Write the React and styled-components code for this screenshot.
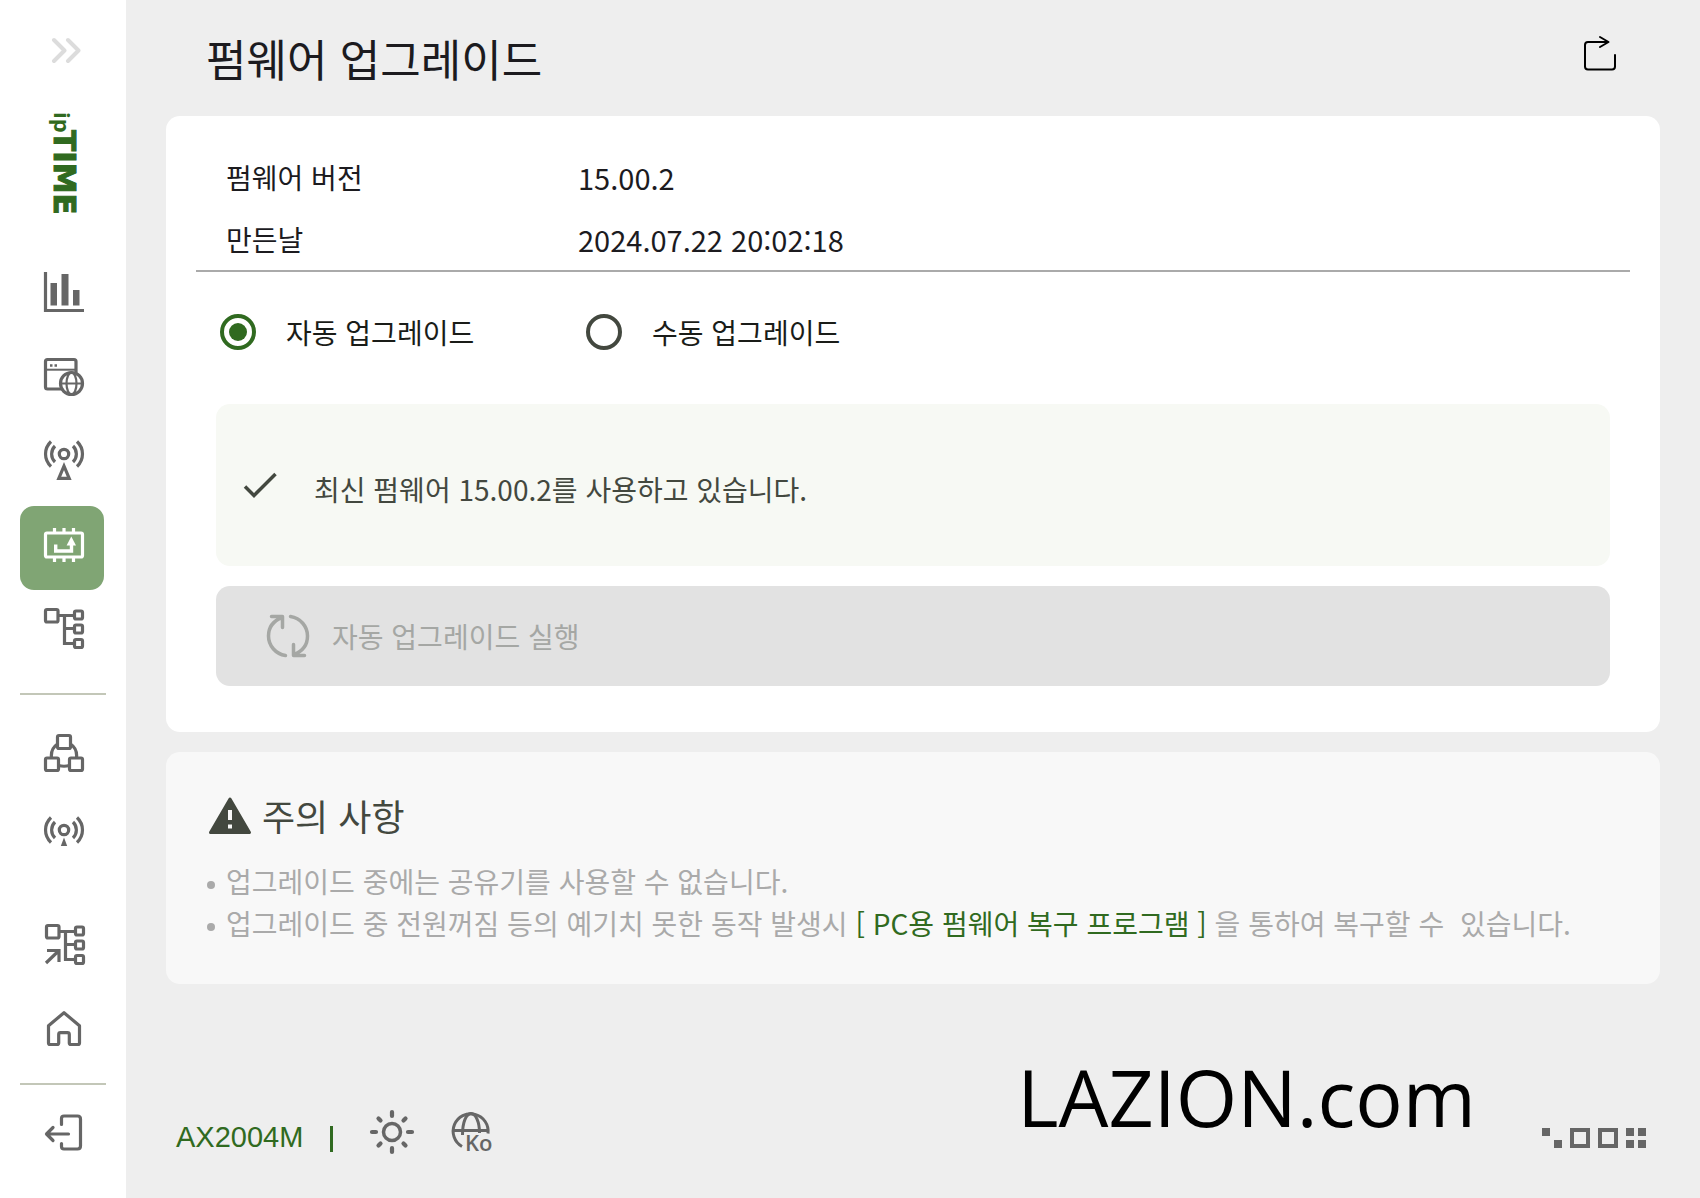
import { useState } from 'react';
import styled, { createGlobalStyle } from 'styled-components';

const GlobalStyle = createGlobalStyle`
  * {
    box-sizing: border-box;
  }

  body {
    margin: 0;
    background: #eeeeee;
    color: #1c1b1f;
    font-family: 'Noto Sans CJK KR', 'Noto Sans', sans-serif;
    font-size: 28px;
    line-height: 42px;
  }

  button {
    padding: 0;
    border: 0;
    background: none;
    color: inherit;
    font: inherit;
    cursor: pointer;
  }

  svg {
    display: block;
    flex: none;
  }
`;

const Page = styled.div`
  display: flex;
  min-height: 100vh;
`;

const Sidebar = styled.aside`
  display: flex;
  flex-direction: column;
  flex: none;
  width: 126px;
  padding: 30px 20px 20px;
  background: #ffffff;
  color: #666666;
`;

const ExpandButton = styled.button`
  align-self: center;
  padding-left: 6px;
  color: #dcdcdc;
`;

const Logo = styled.a`
  align-self: center;
  margin: 40px 0 36px;
`;

const NavGroup = styled.nav`
  display: flex;
  flex-direction: column;
  margin-top: ${({ $push }) => ($push ? 'auto' : '0')};
`;

const NavButton = styled.button`
  display: flex;
  justify-content: center;
  align-items: center;
  width: 84px;
  height: 84px;
  && {
    padding: 0 0 8px 4px;
  }
  border-radius: 14px;
  background: ${({ $active }) => ($active ? '#80a574' : 'transparent')};
  color: ${({ $active }) => ($active ? '#ffffff' : 'inherit')};
`;

const NavLine = styled.hr`
  width: 100%;
  height: 2px;
  margin: ${({ $tight }) => ($tight ? '9px 0' : '19px 0')};
  border: 0;
  background: #c3c7b8;
`;

const Main = styled.main`
  display: flex;
  flex-direction: column;
  flex: 1;
  min-width: 0;
  padding: 0 40px;
`;

const Header = styled.header`
  display: flex;
  justify-content: space-between;
  align-items: center;
  height: 116px;
  padding: 0 40px;
`;

const Title = styled.h1`
  margin: 0;
  font-size: 44px;
  line-height: 64px;
  font-weight: 400;
`;

const RefreshButton = styled.button`
  && {
    padding-bottom: 6px;
  }
`;

const Card = styled.section`
  padding: 30px 30px 46px;
  border-radius: 14px;
  background: #ffffff;
`;

const InfoList = styled.dl`
  margin: 0;
  border-bottom: 2px solid #aaaaaa;
`;

const InfoRow = styled.div`
  display: grid;
  grid-template-columns: 352px 1fr;
  align-items: center;
  height: 62px;
  padding-left: 30px;
`;

const InfoTerm = styled.dt`
  margin: 0;
`;

const InfoValue = styled.dd`
  margin: 0;
  font-size: 29px;
`;

const RadioGroup = styled.div`
  display: grid;
  grid-template-columns: 366px 1fr;
  align-items: center;
  height: 120px;
  padding: 0 24px;
  color: #1a1c18;
`;

const RadioLabel = styled.label`
  display: flex;
  align-items: center;
  gap: 30px;
  cursor: pointer;
`;

const Radio = styled.input`
  appearance: none;
  width: 36px;
  height: 36px;
  margin: 0;
  padding: 5px;
  border: 4px solid #43483f;
  border-radius: 50%;

  &:checked {
    border-color: #306a20;
    background: #306a20 content-box;
  }
`;

const Status = styled.div`
  display: flex;
  align-items: center;
  gap: 37px;
  height: 162px;
  margin: 12px 20px 20px;
  padding: 0 27px;
  border-radius: 14px;
  background: #f7f9f4;
  color: #43483f;
`;

const StatusText = styled.p`
  margin: 0;
  padding-top: 8px;
`;

const Action = styled.div`
  display: flex;
  padding: 0 20px;
`;

const RunButton = styled.button`
  display: flex;
  align-items: center;
  gap: 22px;
  flex: 1;
  height: 100px;
  && {
    padding: 0 50px;
  }
  border-radius: 14px;
  background: #e2e2e2;
  color: #a5a7a4;
  cursor: default;
`;

const Notice = styled.section`
  margin-top: 20px;
  padding: 36px 40px 40px;
  border-radius: 14px;
  background: #f8f8f8;
`;

const NoticeTitle = styled.h2`
  display: flex;
  align-items: center;
  gap: 10px;
  margin: 0 0 18px;
  padding-left: 2px;
  color: #43483f;
  font-size: 36px;
  line-height: 54px;
  font-weight: 400;
`;

const NoticeList = styled.ul`
  margin: 0;
  padding: 0;
  list-style: none;
  color: #aaaaaa;
`;

const NoticeItem = styled.li`
  display: flex;
  gap: 11px;

  &::before {
    content: '';
    flex: none;
    width: 8px;
    height: 8px;
    margin: 21px 0 0 1px;
    border-radius: 50%;
    background: #aaaaaa;
  }
`;

const NoticeLink = styled.a`
  color: #306a20;
  text-decoration: none;
`;

const Footer = styled.footer`
  display: flex;
  align-items: flex-end;
  margin-top: auto;
  padding: 0 14px 40px 10px;
  color: #666666;
`;

const Model = styled.span`
  color: #306a20;
  font-family: 'Liberation Sans', sans-serif;
  font-size: 29px;
`;

const Bar = styled.span`
  width: 3px;
  height: 26px;
  margin: 0 35px 6px 27px;
  background: #306a20;
`;

const FooterButton = styled.button`
  margin: 0 32px 2px 0;
`;

const SiteName = styled.span`
  margin: 0 64px 8px auto;
  color: #000000;
  font-family: 'Open Sans', sans-serif;
  font-size: 79px;
  line-height: 106px;
`;

const DotLogo = styled.svg`
  margin-bottom: 10px;
`;

function Icon({ children }) {
  return (
    <svg
      width="48"
      height="48"
      viewBox="0 0 48 48"
      fill="none"
      stroke="currentColor"
      strokeWidth="3.2"
      aria-hidden="true"
    >
      {children}
    </svg>
  );
}

function TreeShape() {
  return (
    <>
      <rect x="5.5" y="5.5" width="12.5" height="12.5" rx="1.5" />
      <rect x="34.5" y="7" width="8" height="8" rx="1.5" />
      <rect x="34.5" y="21" width="8" height="8" rx="1.5" />
      <rect x="34.5" y="35.5" width="8" height="8" rx="1.5" />
      <path d="M18 11.5H34M24.5 11.5V39.5H34M24.5 24.5H34" />
    </>
  );
}

function WaveShape() {
  return (
    <>
      <circle cx="24" cy="18" r="4.7" />
      <path d="M11 5.5C3.7 12.5 3.7 23.5 11 30.5M37 5.5C44.3 12.5 44.3 23.5 37 30.5" />
      <path d="M15 10C10.5 14.5 10.5 21.5 15 26M33 10C37.5 14.5 37.5 21.5 33 26" />
    </>
  );
}

const icons = {
  chart: (
    <>
      <path d="M5.5 4V42.5H44" />
      <path
        d="M10.5 15h6.5v22.5h-6.5zM21.5 6h7v31.5h-7zM33 22h6.5v15.5h-6.5z"
        fill="currentColor"
        stroke="none"
      />
    </>
  ),
  web: (
    <>
      <rect x="5.5" y="7.5" width="30.5" height="29.5" rx="2" />
      <path d="M5.5 17.7H36" strokeWidth="2" />
      <path d="M10 13.5H12.5M14.5 13.5H17" strokeWidth="2.5" />
      <circle cx="31.5" cy="31.5" r="11" fill="#ffffff" />
      <ellipse cx="31.5" cy="31.5" rx="5" ry="11" strokeWidth="2.2" />
      <path d="M20.5 31.5H42.5" strokeWidth="2" />
    </>
  ),
  antenna: (
    <>
      <WaveShape />
      <path d="M24 30L18.8 42.3H29.2Z" />
    </>
  ),
  firmware: (
    <>
      <rect x="5.5" y="13" width="37" height="24" rx="1.5" />
      <path d="M14.5 8V13M24 8V13M33.5 8V13M14.5 37V42M24 37V42M33.5 37V42" />
      <path d="M15.7 24.5V31H31.5V24" strokeWidth="3.4" />
      <path d="M31.3 16.5L36 25.5H26.6Z" fill="currentColor" stroke="none" />
    </>
  ),
  tree: <TreeShape />,
  cluster: (
    <>
      <rect x="17.5" y="7.5" width="13" height="13" rx="1.5" />
      <rect x="5.5" y="30" width="13" height="12.5" rx="1.5" />
      <rect x="29.5" y="30" width="13" height="12.5" rx="1.5" />
      <path d="M17.5 16C13 19 10.8 24 11.5 30M30.5 16C35 19 37.2 24 36.5 30M18.5 37.5Q24 39 29.5 37.5" />
    </>
  ),
  beacon: (
    <>
      <WaveShape />
      <path d="M24 25.5L27.2 34H20.8Z" fill="currentColor" stroke="none" />
    </>
  ),
  shortcut: (
    <>
      <g transform="translate(1 0)">
        <TreeShape />
      </g>
      <path d="M7 30.5H19V42M18.5 31L6 43" />
    </>
  ),
  home: (
    <path
      d="M24 8.7L39.5 21.8V39Q39.5 40.5 38 40.5H31Q29.3 40.5 29.3 39V30.5Q29.3 28.7 27.5 28.7H20.5Q18.7 28.7 18.7 30.5V39Q18.7 40.5 17 40.5H10Q8.5 40.5 8.5 39V21.8Z"
      strokeLinejoin="round"
    />
  ),
  logout: (
    <path
      d="M21.5 16.5V10.5Q21.5 8 24 8H37.5Q40.5 8 40.5 11V38Q40.5 41 37.5 41H24Q21.5 41 21.5 38.5V35.5M28.5 26H7M13 19.5L6.5 26L13 32.5"
      strokeLinecap="round"
      strokeLinejoin="round"
    />
  ),
};

const menus = [
  { icon: 'chart', label: '시스템 상태' },
  { icon: 'web', label: '인터넷 설정' },
  { icon: 'antenna', label: '무선 설정' },
  { icon: 'firmware', label: '펌웨어 업그레이드' },
  { icon: 'tree', label: '고급 설정' },
];
const meshMenus = [
  { icon: 'cluster', label: '메시 구성' },
  { icon: 'beacon', label: '메시 무선' },
];
const linkMenus = [
  { icon: 'shortcut', label: '바로가기' },
  { icon: 'home', label: '홈' },
];

function Menu({ items, active, push }) {
  return (
    <NavGroup $push={push}>
      {items.map(({ icon, label }) => (
        <NavButton key={icon} type="button" aria-label={label} $active={icon === active}>
          <Icon>{icons[icon]}</Icon>
        </NavButton>
      ))}
    </NavGroup>
  );
}

function LogoMark() {
  return (
    <svg width="42" height="108" viewBox="0 0 42 108" fill="#306a20">
      <g transform="translate(12 3) rotate(90)">
        <text x="-1" y="0" fontFamily="'Open Sans', sans-serif" fontSize="22" fontWeight="700">
          ip
        </text>
        <text
          x="17"
          y="0"
          fontFamily="'DejaVu Sans', sans-serif"
          fontSize="31"
          fontWeight="700"
          stroke="#306a20"
          strokeWidth="1"
        >
          TIME
        </text>
      </g>
    </svg>
  );
}

function App() {
  const [mode, setMode] = useState('auto');

  return (
    <Page lang="ko">
      <GlobalStyle />
      <Sidebar>
        <ExpandButton type="button" aria-label="메뉴 펼치기">
          <svg
            width="30"
            height="40"
            viewBox="0 0 30 40"
            fill="none"
            stroke="currentColor"
            strokeWidth="4"
            strokeLinecap="round"
            strokeLinejoin="round"
          >
            <path d="M3 10L13.5 20.5L3 31M17 10L27.5 20.5L17 31" />
          </svg>
        </ExpandButton>
        <Logo href="#" aria-label="ipTIME">
          <LogoMark />
        </Logo>
        <Menu items={menus} active="firmware" />
        <NavLine />
        <Menu items={meshMenus} />
        <Menu items={linkMenus} push />
        <NavLine $tight />
        <NavButton type="button" aria-label="로그아웃">
          <Icon>{icons.logout}</Icon>
        </NavButton>
      </Sidebar>

      <Main>
        <Header>
          <Title>펌웨어 업그레이드</Title>
          <RefreshButton type="button" aria-label="새로고침">
            <svg
              width="40"
              height="40"
              viewBox="0 0 40 40"
              fill="none"
              stroke="#000000"
              strokeWidth="2"
              strokeLinecap="round"
              strokeLinejoin="round"
            >
              <path d="M28 7H8Q5 7 5 10V31.5Q5 34.5 8 34.5H32Q35 34.5 35 31.5V20M20 2L28.5 7L20 12" />
            </svg>
          </RefreshButton>
        </Header>

        <Card>
          <InfoList>
            <InfoRow>
              <InfoTerm>펌웨어 버전</InfoTerm>
              <InfoValue>15.00.2</InfoValue>
            </InfoRow>
            <InfoRow>
              <InfoTerm>만든날</InfoTerm>
              <InfoValue>2024.07.22 20:02:18</InfoValue>
            </InfoRow>
          </InfoList>

          <RadioGroup role="radiogroup" aria-label="업그레이드 방식">
            <RadioLabel>
              <Radio
                type="radio"
                name="mode"
                checked={mode === 'auto'}
                onChange={() => setMode('auto')}
              />
              자동 업그레이드
            </RadioLabel>
            <RadioLabel>
              <Radio
                type="radio"
                name="mode"
                checked={mode === 'manual'}
                onChange={() => setMode('manual')}
              />
              수동 업그레이드
            </RadioLabel>
          </RadioGroup>

          <Status>
            <svg
              width="34"
              height="26"
              viewBox="0 0 34 26"
              fill="none"
              stroke="currentColor"
              strokeWidth="3.5"
              aria-hidden="true"
            >
              <path d="M2 14.5L11 23.5L32.5 2" />
            </svg>
            <StatusText>최신 펌웨어 15.00.2를 사용하고 있습니다.</StatusText>
          </Status>

          <Action>
            <RunButton type="button" disabled>
              <svg
                width="44"
                height="44"
                viewBox="0 0 44 44"
                fill="none"
                stroke="currentColor"
                strokeWidth="3.5"
                strokeLinecap="round"
                strokeLinejoin="round"
              >
                <path d="M5.5 2.5H16.5V13.5M16 3.5C7 7 2.5 14 2.5 22C2.5 31.5 9.5 40 19.5 41.5" />
                <path d="M38.5 41.5H27.5V30.5M28 40.5C37 37 41.5 30 41.5 22C41.5 12.5 34.5 4 24.5 2.5" />
              </svg>
              자동 업그레이드 실행
            </RunButton>
          </Action>
        </Card>

        <Notice>
          <NoticeTitle>
            <svg width="44" height="40" viewBox="0 0 44 40" aria-hidden="true">
              <path
                d="M22 4L41.5 37.5H2.5Z"
                fill="currentColor"
                stroke="currentColor"
                strokeWidth="3"
                strokeLinejoin="round"
              />
              <path d="M22 15V25M22 29.5V33.5" stroke="#f8f8f8" strokeWidth="4" />
            </svg>
            주의 사항
          </NoticeTitle>
          <NoticeList>
            <NoticeItem>
              <span>업그레이드 중에는 공유기를 사용할 수 없습니다.</span>
            </NoticeItem>
            <NoticeItem>
              <span>
                업그레이드 중 전원꺼짐 등의 예기치 못한 동작 발생시{' '}
                <NoticeLink href="#">[ PC용 펌웨어 복구 프로그램 ]</NoticeLink>
                {' 을 통하여 복구할 수 \u00a0있습니다.'}
              </span>
            </NoticeItem>
          </NoticeList>
        </Notice>

        <Footer>
          <Model>AX2004M</Model>
          <Bar />
          <FooterButton type="button" aria-label="밝은 테마">
            <svg
              width="48"
              height="48"
              viewBox="0 0 48 48"
              fill="none"
              stroke="currentColor"
              strokeLinecap="round"
            >
              <circle cx="24" cy="24" r="8.5" strokeWidth="3.5" />
              <path
                d="M24 4V8M24 40V44M4 24H8M40 24H44M10.5 10.5L12.5 12.5M35.5 35.5L37.5 37.5M10.5 37.5L12.5 35.5M35.5 12.5L37.5 10.5"
                strokeWidth="4.2"
              />
            </svg>
          </FooterButton>
          <FooterButton type="button" aria-label="언어 선택">
            <svg
              width="48"
              height="48"
              viewBox="0 0 48 48"
              fill="none"
              stroke="currentColor"
              strokeWidth="3"
            >
              <path d="M14 38.5A17.5 17.5 0 1 1 40 25.5" />
              <path d="M6 22.5H40M14.5 27C14.5 14 18 6 23 5.5C28 6 31.5 14 31.5 25" />
              <text
                x="17"
                y="43"
                fill="currentColor"
                stroke="none"
                fontFamily="'Open Sans', sans-serif"
                fontSize="22"
                fontWeight="600"
              >
                Ko
              </text>
            </svg>
          </FooterButton>
          <SiteName>LAZION.com</SiteName>
          <DotLogo width="106" height="20" viewBox="0 0 106 20" fill="#666666">
            <path d="M2 0h8v8h-8zM14 12h8v8h-8zM86 0h8v8h-8zM98 0h8v8h-8zM86 12h8v8h-8zM98 12h8v8h-8z" />
            <path d="M32 2h16v16h-16zM60 2h16v16h-16z" fill="none" stroke="#666666" strokeWidth="4" />
          </DotLogo>
        </Footer>
      </Main>
    </Page>
  );
}

export default App;
